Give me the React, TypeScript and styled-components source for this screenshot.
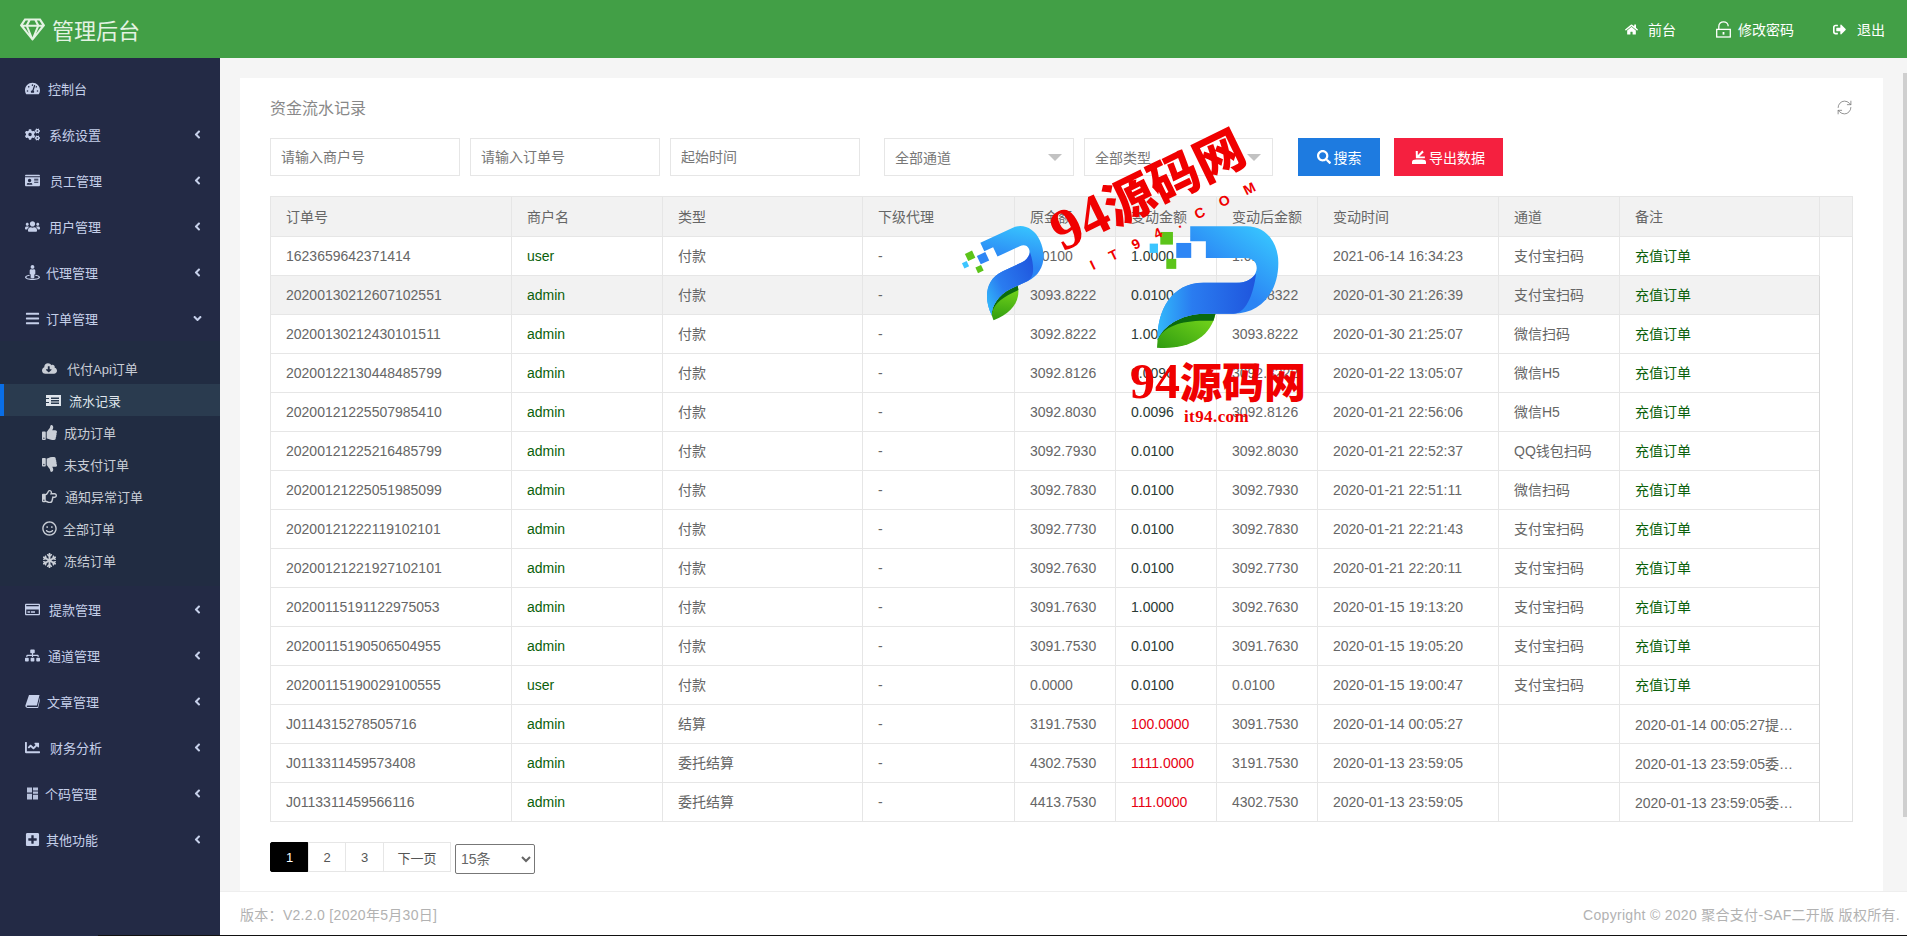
import React from "react";
import styled, { createGlobalStyle } from "styled-components";
import {
  FaTachometerAlt, FaCogs, FaIdCard, FaUsers, FaStreetView, FaBars, FaCloudDownloadAlt,
  FaThumbsUp, FaThumbsDown, FaRegHandPointRight, FaRegSmile, FaSnowflake, FaRegCreditCard, FaSitemap,
  FaChartLine, FaPlusSquare, FaHome, FaSignOutAlt, FaSearch, FaRegGem, FaAngleLeft,
  FaAngleDown,
} from "react-icons/fa";
import { RefreshCw } from "lucide-react";

const Global = createGlobalStyle`
  html, body { margin: 0; padding: 0; height: 100%; overflow: hidden; background: #232a45; }
  body, input, select, button { font-family: "Liberation Sans", "Noto Sans CJK SC", sans-serif; }
  * { box-sizing: border-box; }
`;

const Page = styled.div`
  width: 1907px; height: 936px; display: flex; flex-direction: column; position: relative; overflow: hidden;
`;
const Header = styled.header`
  height: 58px; flex: none; background: #429f46; display: flex; align-items: center; justify-content: space-between;
  padding: 0 22px 0 20px; color: #fff;
`;
const Brand = styled.div`
  display: flex; align-items: center; gap: 7px; font-size: 22px; color: #e4f3e3;
  svg { width: 25px; height: 25px; }
`;
const TopNav = styled.nav`display: flex; align-items: center;`;
const TopLink = styled.a<{ $ml: number; $gap: number }>`
  display: flex; align-items: center; margin-left: ${p => p.$ml}px; gap: ${p => p.$gap}px; font-size: 14px; color: #fff;
  svg { flex: none; }
`;
const Middle = styled.div`flex: 1; display: flex; min-height: 0;`;
const Sidebar = styled.aside`
  width: 220px; flex: none; background: #232a45; color: #c6d0ea; padding-top: 7px; font-size: 13px;
`;
const NavItem = styled.div`
  height: 46px; display: flex; align-items: center; padding-left: 25px; padding-right: 16px;
`;
const NavIcon = styled.span<{ $gap: number }>`
  display: flex; width: 15px; margin-right: ${p => p.$gap}px; flex: none; justify-content: center;
  svg { width: 15px; height: 15px; }
`;
const NavLabel = styled.span`flex: 1;`;
const Chevron = styled.span`display: flex; svg { width: 13px; height: 13px; }`;
const SubMenu = styled.div`background: #212c42; padding: 11px 0 10px; color: #c9ced6;`;
const SubItem = styled.div<{ $active?: boolean }>`
  height: 32px; display: flex; align-items: center; padding-left: 42px;
  border-left: ${p => (p.$active ? "4px solid #0a6ee6" : "0")};
  background: ${p => (p.$active ? "#2a3b4f" : "transparent")};
  color: ${p => (p.$active ? "#dfe5ec" : "inherit")};
`;
const Main = styled.main`flex: 1; min-width: 0; display: flex; flex-direction: column; background: #f5f5f5;`;
const Content = styled.div`flex: 1; min-height: 0; padding: 20px 24px 0 20px; position: relative;`;
const Card = styled.section`background: #fff; height: 100%; padding: 18px 30px 0;`;
const CardHead = styled.div`
  height: 22px; display: flex; align-items: center; justify-content: space-between;
  font-size: 16px; color: #888; svg { color: #777; }
`;
const Filters = styled.div`display: flex; align-items: center; margin-top: 20px; height: 38px;`;
const TextInput = styled.input<{ $mr?: number }>`
  width: 190px; height: 38px; border: 1px solid #e6e6e6; margin-right: ${p => p.$mr ?? 10}px; padding: 0 10px; font-size: 14px; color: #666;
  outline: none; background: #fff;
  &::placeholder { color: #777; }
`;
const FakeSelect = styled.div<{ $ml: number; $w: number }>`
  width: ${p => p.$w}px; height: 38px; border: 1px solid #e6e6e6; margin-left: ${p => p.$ml}px; padding: 0 10px; font-size: 14px; color: #777;
  display: flex; align-items: center; justify-content: space-between;
  &::after { content: ""; border-style: solid; border-width: 7px 7px 0; border-color: #c2c2c2 transparent transparent; margin-right: 1px; }
`;
const Btn = styled.button<{ $bg: string; $w: number; $ml: number }>`
  width: ${p => p.$w}px; height: 38px; margin-left: ${p => p.$ml}px; background: ${p => p.$bg}; color: #fff; border: 0; font-size: 14px;
  display: flex; align-items: center; justify-content: center; gap: 3px; padding: 0;
  svg { width: 14px; height: 14px; }
`;
const Table = styled.table`
  margin-top: 20px; width: 1582px; border-collapse: collapse; table-layout: fixed; font-size: 14px; color: #666;
  border: 1px solid #e2e2e2; background: #fff;
`;
const Th = styled.th<{ $w: number }>`
  width: ${p => p.$w}px; height: 40px; background: #f2f2f2; font-weight: 400; text-align: left; padding: 0 15px 2px; border: 1px solid #e6e6e6; color: #666;
`;
const Tr = styled.tr<{ $hl?: boolean }>`
  background: ${p => (p.$hl ? "#f2f2f2" : "#fff")};
`;
const Td = styled.td<{ $color?: string; $lift?: boolean }>`
  height: 39px; padding: 0 15px ${p => (p.$lift ? 2 : 0)}px; border: 1px solid #e6e6e6; color: ${p => p.$color || "#666"};
  white-space: nowrap; overflow: hidden; text-overflow: ellipsis;
`;
const BlankCell = styled.td`background: #fff; border: 1px solid #e2e2e2; border-left-color: #d8d8d8;`;
const Pager = styled.div`display: flex; align-items: flex-start; margin-top: 20px;`;
const PageBtn = styled.a<{ $w: number; $active?: boolean }>`
  width: ${p => p.$w}px; height: 30px; display: flex; align-items: center; justify-content: center; font-size: 13px;
  background: ${p => (p.$active ? "#000" : "#fff")}; color: ${p => (p.$active ? "#fff" : "#555")};
  border: 1px solid ${p => (p.$active ? "#000" : "#e6e6e6")}; margin-left: ${p => (p.$active ? 0 : -1)}px;
  border-radius: ${p => (p.$active ? "2px" : "0")};
`;
const PageSize = styled.select`
  width: 80px; height: 30px; margin-left: 4px; margin-top: 2px; font-size: 14px; color: #666; border: 1px solid #777; border-radius: 2px; background: #fff; padding-left: 1px;
`;
const Footer = styled.footer`
  height: 44px; flex: none; background: #fff; border-top: 1px solid #eee; display: flex; align-items: center; justify-content: space-between;
  padding: 0 7px 0 20px; font-size: 14px; color: #b2b2b2; letter-spacing: .3px;
`;
const Strip = styled.div`height: 1px; flex: none; margin-left: 98px; background: #111;`;
const ScrollThumb = styled.div`position: absolute; right: 0; top: 15px; width: 4px; height: 744px; background: #cfcfcf;`;

const Overlay = styled.div`position: absolute; inset: 0; pointer-events: none; overflow: hidden;`;
const Logo = styled.svg<{ $x: number; $y: number; $w: number; $h: number; $rot?: number }>`
  position: absolute; left: ${p => p.$x}px; top: ${p => p.$y}px; width: ${p => p.$w}px; height: ${p => p.$h}px;
  transform: rotate(${p => p.$rot || 0}deg);
`;
const Stamp = styled.div`
  position: absolute; left: 1067px; top: 203px; font: 900 50px/1 "Liberation Serif", "Noto Sans CJK SC", serif; color: #f00000;
  white-space: nowrap; transform: rotate(-26deg); transform-origin: left bottom; display: flex; align-items: baseline;
`;
const StampDigits = styled.span`font-size: 58px; font-weight: 700;`;
const Arc = styled.div`
  position: absolute; left: 1094px; top: 258px; font: 700 14px/1 "Liberation Sans", sans-serif; color: #f00000; letter-spacing: 16.8px;
  white-space: nowrap; transform: rotate(-26deg); transform-origin: left bottom;
`;
const Brand2 = styled.div`
  position: absolute; left: 1130px; top: 358px; font: 900 42px/46px "Liberation Serif", "Noto Sans CJK SC", serif; color: #f00000; white-space: nowrap;
`;
const Brand2Digits = styled.span`font-weight: 700; font-size: 50px;`;
const Domain = styled.div`
  position: absolute; left: 1184px; top: 408px; font: 700 17px/18px "Liberation Serif", serif; color: #f00000; letter-spacing: .4px;
`;

const ListIcon = () => (
  <svg viewBox="0 0 15 15"><path fill="currentColor" fillRule="evenodd" d="M0 2h15v11H0zM0 5h3v1H0zM0 9h3v1H0zM5 4.5h8v1.4H5zM5 7h8v1.4H5zM5 9.5h8v1.4H5z" /></svg>
);
const SlantBook = () => (
  <svg viewBox="0 0 15 15"><path fill="currentColor" d="M4 1h10.5l-2.6 10.4H2.6c-.8 0-1 .6-.8 1 .2.4.6.6 1.2.6h9.6l2.4-9.6.5.6-2.4 10H2.8C1.2 14 .3 13 .4 11.6Z" /></svg>
);
const PanelIcon = () => (
  <svg viewBox="0 0 15 15"><path fill="currentColor" d="M2 1.5h5v5H2zM2 7.8h5v5.7H2zM8 1.5h5v3H8zM8 5.5h5v2.2H8zM8 8.7h5v4.8H8z" opacity=".9" /></svg>
);
const ExportIcon = () => (
  <svg viewBox="0 0 15 15"><path fill="currentColor" d="M0 15v-2.2C0 11 2 10.2 4.5 10.2h6c2.5 0 4.5.8 4.5 2.6V15ZM4.2 8.8 4 1.2h2.2v4.4L11 .6l1.6 1.7L7.9 7h6l-.2 1.9Z" /></svg>
);
const OpenLock = () => (
  <svg width="15" height="17" viewBox="0 0 15 17" fill="none" stroke="currentColor" strokeWidth="1.3">
    <rect x=".7" y="8.4" width="13.6" height="7.6" />
    <path d="M2.8 8.4V5.4C2.8 2.7 4.9.8 7.5.8s4.7 1.9 4.7 4.4" />
    <path d="M7.5 11v2.6" strokeWidth="1.8" />
  </svg>
);

const main1: [string, React.ReactNode, number][] = [
  ["控制台", <FaTachometerAlt />, 8],
  ["系统设置", <FaCogs />, 9],
  ["员工管理", <FaIdCard />, 10],
  ["用户管理", <FaUsers />, 9],
  ["代理管理", <FaStreetView />, 6],
];
const subs: [string, React.ReactNode, number, boolean?][] = [
  ["代付Api订单", <FaCloudDownloadAlt />, 10],
  ["流水记录", <ListIcon />, 8, true],
  ["成功订单", <FaThumbsUp />, 7],
  ["未支付订单", <FaThumbsDown />, 7],
  ["通知异常订单", <FaRegHandPointRight />, 8],
  ["全部订单", <FaRegSmile />, 6],
  ["冻结订单", <FaSnowflake />, 7],
];
const main2: [string, React.ReactNode, number][] = [
  ["提款管理", <FaRegCreditCard />, 9],
  ["通道管理", <FaSitemap />, 8],
  ["文章管理", <SlantBook />, 7],
  ["财务分析", <FaChartLine />, 10],
  ["个码管理", <PanelIcon />, 5],
  ["其他功能", <FaPlusSquare />, 6],
];

const G = "#0a5f0a";
const R = "#e60012";
const cols = [241, 151, 200, 152, 101, 101, 101, 181, 121, 200, 33];
const heads = ["订单号", "商户名", "类型", "下级代理", "原金额", "变动金额", "变动后金额", "变动时间", "通道", "备注", ""];
type Row = [string, string, string, string, string, string, string, string, string];
const rows: Row[] = [
  ["1623659642371414", "user", "付款", "0.0100", "1.0000", "1.0100", "2021-06-14 16:34:23", "支付宝扫码", ""],
  ["20200130212607102551", "admin", "付款", "3093.8222", "0.0100", "3093.8322", "2020-01-30 21:26:39", "支付宝扫码", ""],
  ["20200130212430101511", "admin", "付款", "3092.8222", "1.0000", "3093.8222", "2020-01-30 21:25:07", "微信扫码", ""],
  ["20200122130448485799", "admin", "付款", "3092.8126", "0.0096", "3092.8222", "2020-01-22 13:05:07", "微信H5", ""],
  ["20200121225507985410", "admin", "付款", "3092.8030", "0.0096", "3092.8126", "2020-01-21 22:56:06", "微信H5", ""],
  ["20200121225216485799", "admin", "付款", "3092.7930", "0.0100", "3092.8030", "2020-01-21 22:52:37", "QQ钱包扫码", ""],
  ["20200121225051985099", "admin", "付款", "3092.7830", "0.0100", "3092.7930", "2020-01-21 22:51:11", "微信扫码", ""],
  ["20200121222119102101", "admin", "付款", "3092.7730", "0.0100", "3092.7830", "2020-01-21 22:21:43", "支付宝扫码", ""],
  ["20200121221927102101", "admin", "付款", "3092.7630", "0.0100", "3092.7730", "2020-01-21 22:20:11", "支付宝扫码", ""],
  ["20200115191122975053", "admin", "付款", "3091.7630", "1.0000", "3092.7630", "2020-01-15 19:13:20", "支付宝扫码", ""],
  ["20200115190506504955", "admin", "付款", "3091.7530", "0.0100", "3091.7630", "2020-01-15 19:05:20", "支付宝扫码", ""],
  ["20200115190029100555", "user", "付款", "0.0000", "0.0100", "0.0100", "2020-01-15 19:00:47", "支付宝扫码", ""],
  ["J0114315278505716", "admin", "结算", "3191.7530", "100.0000", "3091.7530", "2020-01-14 00:05:27", "", "2020-01-14 00:05:27提款结算申请"],
  ["J0113311459573408", "admin", "委托结算", "4302.7530", "1111.0000", "3191.7530", "2020-01-13 23:59:05", "", "2020-01-13 23:59:05委托结算申请"],
  ["J0113311459566116", "admin", "委托结算", "4413.7530", "111.0000", "4302.7530", "2020-01-13 23:59:05", "", "2020-01-13 23:59:05委托结算申请"],
];

const LogoArt = ({ id }: { id: string }) => (
  <>
    <defs>
      <linearGradient id={id + "b"} x1="0.1" y1="1" x2="0.9" y2="0">
        <stop offset="0" stopColor="#2d8cf5" />
        <stop offset="0.55" stopColor="#2b84f4" />
        <stop offset="1" stopColor="#38c8ff" />
      </linearGradient>
      <linearGradient id={id + "d"} x1="0" y1="0.5" x2="1" y2="0.5">
        <stop offset="0" stopColor="#32b8fb" />
        <stop offset="0.35" stopColor="#2a7cf0" />
        <stop offset="1" stopColor="#1f55dd" />
      </linearGradient>
      <linearGradient id={id + "g"} x1="0" y1="1" x2="1" y2="0">
        <stop offset="0" stopColor="#2f9b10" />
        <stop offset="1" stopColor="#7ada1c" />
      </linearGradient>
    </defs>
    <rect x="660" y="337" width="38" height="38" fill="#5cc41a" />
    <rect x="708" y="370" width="45" height="45" fill="#2e86f5" />
    <rect x="628" y="372" width="25" height="28" fill="#3cc5ff" />
    <rect x="678" y="418" width="30" height="30" fill="#5cc41a" />
    <path d="M650 685C750 692 812 650 826 583H790C720 585 670 620 652 660Z" fill={`url(#${id}g)`} />
    <path d="M652 662C668 622 722 604 790 604L820 604L826 583H790C720 585 670 620 652 660Z" fill="#0b6a0e" />
    <path d="M750 320H920C975 320 1015 365 1015 430C1015 520 960 583 880 583H790C720 585 670 620 652 660C650 580 690 490 790 490H890C930 490 950 465 950 445C950 425 935 415 915 415H797V365H750Z" fill={`url(#${id}b)`} />
    <path d="M652 660C650 580 690 490 790 490H890C915 490 935 480 948 462C940 530 915 583 880 583H790C720 585 670 620 652 660Z" fill={`url(#${id}d)`} />
  </>
);

export default function App() {
  return (
    <Page>
      <Global />
      <Header>
        <Brand><FaRegGem />管理后台</Brand>
        <TopNav>
          <TopLink $ml={0} $gap={10}><FaHome size={13} />前台</TopLink>
          <TopLink $ml={40} $gap={7}><OpenLock />修改密码</TopLink>
          <TopLink $ml={39} $gap={11}><FaSignOutAlt size={13} />退出</TopLink>
        </TopNav>
      </Header>
      <Middle>
        <Sidebar>
          {main1.map(([t, ic, g], i) => (
            <NavItem key={t}>
              <NavIcon $gap={g}>{ic}</NavIcon>
              <NavLabel>{t}</NavLabel>
              {i > 0 && <Chevron><FaAngleLeft /></Chevron>}
            </NavItem>
          ))}
          <NavItem>
            <NavIcon $gap={6}><FaBars /></NavIcon>
            <NavLabel>订单管理</NavLabel>
            <Chevron><FaAngleDown /></Chevron>
          </NavItem>
          <SubMenu>
            {subs.map(([t, ic, g, a]) => (
              <SubItem key={t} $active={a}>
                <NavIcon $gap={g}>{ic}</NavIcon>
                {t}
              </SubItem>
            ))}
          </SubMenu>
          {main2.map(([t, ic, g]) => (
            <NavItem key={t}>
              <NavIcon $gap={g}>{ic}</NavIcon>
              <NavLabel>{t}</NavLabel>
              <Chevron><FaAngleLeft /></Chevron>
            </NavItem>
          ))}
        </Sidebar>
        <Main>
          <Content>
            <ScrollThumb />
            <Card>
              <CardHead>资金流水记录<RefreshCw size={17} strokeWidth={1.1} /></CardHead>
              <Filters>
                <TextInput placeholder="请输入商户号" />
                <TextInput placeholder="请输入订单号" />
                <TextInput placeholder="起始时间" $mr={0} />
                <FakeSelect $ml={24} $w={190}>全部通道</FakeSelect>
                <FakeSelect $ml={10} $w={189}>全部类型</FakeSelect>
                <Btn $bg="#1e7be0" $w={82} $ml={25}><FaSearch />搜索</Btn>
                <Btn $bg="#f5203f" $w={109} $ml={14}><ExportIcon />导出数据</Btn>
              </Filters>
              <Table>
                <thead>
                  <tr>{heads.map((h, i) => <Th key={i} $w={cols[i]}>{h}</Th>)}</tr>
                </thead>
                <tbody>
                  {rows.map((r, i) => (
                    <Tr key={r[0]} $hl={i === 1}>
                      <Td>{r[0]}</Td>
                      <Td $color={G}>{r[1]}</Td>
                      <Td $lift>{r[2]}</Td>
                      <Td>-</Td>
                      <Td>{r[3]}</Td>
                      <Td $color={i >= 12 ? R : "#2a3a35"}>{r[4]}</Td>
                      <Td>{r[5]}</Td>
                      <Td>{r[6]}</Td>
                      <Td $lift>{r[7]}</Td>
                      <Td $lift={!r[8]} $color={r[8] ? undefined : G}>{r[8] || "充值订单"}</Td>
                      {i === 0 && <BlankCell rowSpan={15} />}
                    </Tr>
                  ))}
                </tbody>
              </Table>
              <Pager>
                <PageBtn $w={39} $active>1</PageBtn>
                <PageBtn $w={38}>2</PageBtn>
                <PageBtn $w={39}>3</PageBtn>
                <PageBtn $w={68}>下一页</PageBtn>
                <PageSize defaultValue="15"><option value="15">15条</option></PageSize>
              </Pager>
            </Card>
          </Content>
          <Footer>
            <span>版本：V2.2.0 [2020年5月30日]</span>
            <span>Copyright © 2020 聚合支付-SAF二开版 版权所有.</span>
          </Footer>
        </Main>
      </Middle>
      <Strip />
      <Overlay>
        <Logo $x={968} $y={231} $w={83} $h={80} $rot={-25} viewBox="620 310 400 385"><LogoArt id="s" /></Logo>
        <Logo $x={1147} $y={223} $w={133} $h={128} viewBox="620 310 400 385"><LogoArt id="l" /></Logo>
        <Stamp><StampDigits>94</StampDigits>源码网</Stamp>
        <Arc>IT94.COM</Arc>
        <Brand2><Brand2Digits>94</Brand2Digits>源码网</Brand2>
        <Domain>it94.com</Domain>
      </Overlay>
    </Page>
  );
}
